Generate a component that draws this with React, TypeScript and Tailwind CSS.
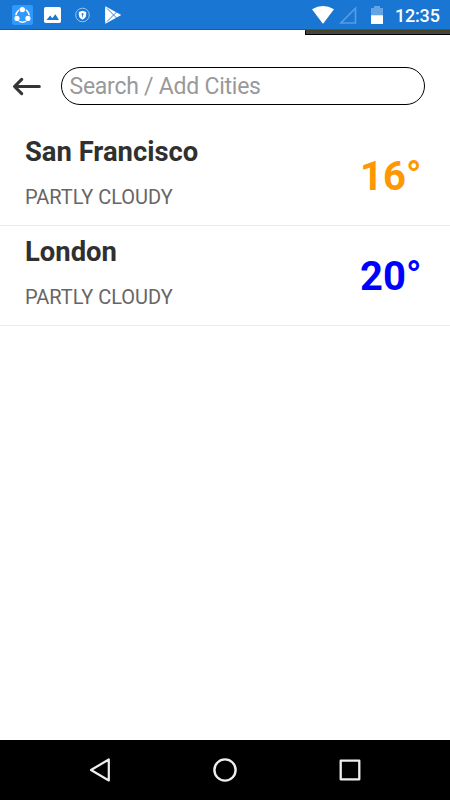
type City = { name: string; condition: string; temp: string; color: string };

const cities: City[] = [
  { name: "San Francisco", condition: "PARTLY CLOUDY", temp: "16°", color: "text-[#ff9800]" },
  { name: "London", condition: "PARTLY CLOUDY", temp: "20°", color: "text-[#0000ff]" },
];

function StatusBar() {
  return (
    <header className="relative flex h-[30px] items-center border-b border-[#125bb8] bg-[#1976d2] pl-3 pr-[10px] text-white">
      <svg className="h-5 w-[21px]" viewBox="0 0 21 20">
        <rect width="21" height="20" rx="2" fill="#2f99ff" />
        <circle cx="10.5" cy="10.6" r="6.6" fill="none" stroke="#fff" strokeWidth="1.5" />
        <circle cx="10.3" cy="4.6" r="3.5" fill="#2f99ff" />
        <circle cx="5" cy="13.4" r="3.3" fill="#2f99ff" />
        <circle cx="15.9" cy="13.4" r="3.3" fill="#2f99ff" />
        <circle cx="10.3" cy="4.6" r="2.7" fill="#fff" />
        <circle cx="5" cy="13.4" r="2.6" fill="#fff" />
        <circle cx="15.9" cy="13.4" r="2.6" fill="#fff" />
      </svg>
      <svg className="ml-[11px] h-4 w-[17px]" viewBox="0 0 17 16">
        <rect width="17" height="16" rx="1.8" fill="#fff" />
        <path d="M2.5 13 L6.2 8.6 L8.3 11.2 L11.4 7.3 L15 13Z" fill="#1976d2" />
      </svg>
      <svg className="ml-[14px] h-4 w-4" viewBox="0 0 16 16">
        <circle cx="7.5" cy="8" r="6.8" fill="none" stroke="#a7cdf2" strokeWidth=".9" />
        <path d="M7.5 3.8 L11.2 5.1 V7.8 C11.2 10 9.7 11.8 7.5 12.7 C5.3 11.8 3.8 10 3.8 7.8 V5.1Z" fill="#fff" />
        <path d="M6.7 6.3H8.4V7.7L7.9 8.5V10.2H7.2V8.5L6.7 7.7Z" fill="#1976d2" />
      </svg>
      <svg className="ml-[14px] h-[18px] w-[17px]" viewBox="0 0 17 18">
        <path d="M.3 .2 L16.3 9 L.3 17.8Z" fill="#fff" />
        <path d="M2 2.4 L12.2 12.6 M2 15.6 L12.2 5.4" stroke="#1976d2" strokeWidth=".9" />
        <path d="M.3 2 L6.4 9 L.3 16Z" fill="#fff" />
      </svg>
      <div className="ml-auto flex items-center">
        <svg className="h-[18px] w-[22px]" viewBox="0 0 22 18">
          <path d="M0 3.3 Q11 -3.3 22 3.3 L11.3 17.4 Q11 17.8 10.7 17.4Z" fill="#fff" />
        </svg>
        <svg className="ml-[5px] h-[18px] w-[18px]" viewBox="0 0 18 18">
          <path d="M1.9 17 H16.5 V2.2Z" fill="none" stroke="#569fe6" strokeWidth="1.6" />
        </svg>
        <svg className="ml-[14px] h-[18px] w-3" viewBox="0 0 12 18">
          <path d="M3 0 H9 V2 H12 V9.2 H0 V2 H3Z" fill="#62a5e5" />
          <path d="M0 9.2 H12 V18 H0Z" fill="#fff" />
        </svg>
        <span className="ml-[12px] w-[45px] whitespace-nowrap pt-[2px] text-[18px] font-medium leading-[20px] tracking-[-0.2px]">12:35</span>
      </div>
      <div className="absolute left-[305px] right-0 top-[30px] h-[5px] border-b border-l border-t border-b-black border-l-black border-t-[#49441f] bg-[#444]" />
    </header>
  );
}

function CityRow({ city }: { city: City }) {
  return (
    <li className="flex h-[100px] justify-between border-b border-[#eaeaea] pl-[25px] pr-[28.5px]">
      <div className="flex flex-col gap-[17px] pt-[10px]">
        <h2 className="text-[27.4px] font-bold leading-[32px] text-[#303030]">{city.name}</h2>
        <p className="text-[20px] leading-[24px] text-[#666]">{city.condition}</p>
      </div>
      <span className={"pt-[27px] text-[40px] font-bold leading-[48px] " + city.color}>{city.temp}</span>
    </li>
  );
}

export default function App() {
  return (
    <div className="flex h-[800px] w-[450px] flex-col overflow-hidden bg-white font-[Roboto,sans-serif]">
      <StatusBar />
      <main className="flex-1">
        <div className="flex h-[96px] items-center pl-[12px] pt-[16px]">
          <svg className="h-5 w-[30px]" viewBox="0 0 30 20" fill="none" stroke="#353535" strokeWidth="3.1" strokeLinecap="round" strokeLinejoin="round">
            <path d="M27.3 10.5 H2.7 M9.7 3.3 L2.5 10.5 L9.7 17.7" />
          </svg>
          <div className="ml-[19px] flex h-[38px] w-[364px] items-center rounded-full border-[1.3px] border-black px-[7.5px]">
            <span className="pt-[2px] text-[23px] leading-[30px] tracking-[-0.25px] text-[#999]">Search / Add Cities</span>
          </div>
        </div>
        <ul>
          {cities.map((city) => (
            <CityRow key={city.name} city={city} />
          ))}
        </ul>
      </main>
      <nav className="flex h-[60px] items-center justify-between bg-black pl-[88px] pr-[88px]">
        <svg className="h-6 w-6" viewBox="0 0 24 24" fill="none" stroke="#eee" strokeWidth="2.2" strokeLinejoin="round">
          <path d="M20.8 1.5 V22.5 L3 12Z" />
        </svg>
        <svg className="h-6 w-6" viewBox="0 0 24 24" fill="none" stroke="#eee" strokeWidth="2.4">
          <circle cx="12" cy="12" r="10.6" />
        </svg>
        <svg className="h-6 w-6" viewBox="0 0 24 24" fill="none" stroke="#eee" strokeWidth="2.3" strokeLinejoin="round">
          <rect x="2.7" y="2.7" width="18.6" height="18.6" />
        </svg>
      </nav>
    </div>
  );
}
